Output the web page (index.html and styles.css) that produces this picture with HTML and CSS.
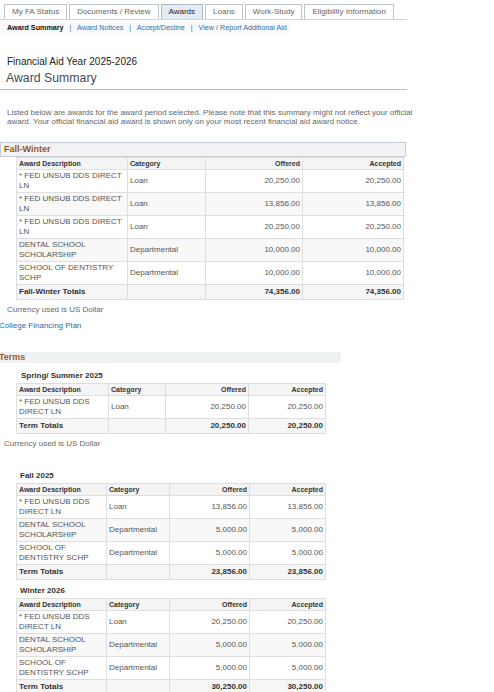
FILE: index.html
```html
<!DOCTYPE html>
<html lang="en">
<head>
    <meta charset="UTF-8">
    <meta name="viewport" content="width=device-width, initial-scale=1.0">
    <title>Award Summary</title>
    <link rel="stylesheet" href="styles.css">
</head>
<body>
    <nav class="tabs">
        <a class="tab" href="#">My FA Status</a>
        <a class="tab" href="#">Documents / Review</a>
        <a class="tab active" href="#">Awards</a>
        <a class="tab" href="#">Loans</a>
        <a class="tab" href="#">Work-Study</a>
        <a class="tab" href="#">Eligibility Information</a>
    </nav>
    <div class="subnav">
        <span class="current">Award Summary</span>
        <span class="sep">|</span>
        <a href="#">Award Notices</a>
        <span class="sep">|</span>
        <a href="#">Accept/Decline</a>
        <span class="sep">|</span>
        <a href="#">View / Report Additional Aid</a>
    </div>

    <div class="page-head">
        <div class="aid-year">Financial Aid Year 2025-2026</div>
        <h1>Award Summary</h1>
    </div>

    <p class="intro">
        Listed below are awards for the award period selected. Please note that this summary might not reflect your official
        award. Your official financial aid award is shown only on your most recent financial aid award notice.
    </p>

    <div class="period-bar">Fall-Winter</div>
    <table class="awards wide">
        <colgroup>
            <col style="width:111px"><col style="width:78px"><col style="width:97px"><col style="width:101px">
        </colgroup>
        <tr class="head"><th>Award Description</th><th>Category</th><th class="num">Offered</th><th class="num">Accepted</th></tr>
        <tr><td>* FED UNSUB DDS DIRECT LN</td><td>Loan</td><td class="num">20,250.00</td><td class="num">20,250.00</td></tr>
        <tr class="alt"><td>* FED UNSUB DDS DIRECT LN</td><td>Loan</td><td class="num">13,856.00</td><td class="num">13,856.00</td></tr>
        <tr><td>* FED UNSUB DDS DIRECT LN</td><td>Loan</td><td class="num">20,250.00</td><td class="num">20,250.00</td></tr>
        <tr class="alt"><td>DENTAL SCHOOL SCHOLARSHIP</td><td>Departmental</td><td class="num">10,000.00</td><td class="num">10,000.00</td></tr>
        <tr><td>SCHOOL OF DENTISTRY SCHP</td><td>Departmental</td><td class="num">10,000.00</td><td class="num">10,000.00</td></tr>
        <tr class="total"><td>Fall-Winter Totals</td><td></td><td class="num">74,356.00</td><td class="num">74,356.00</td></tr>
    </table>
    <div class="currency">Currency used is US Dollar</div>
    <a class="plan-link" href="#">College Financing Plan</a>

    <div class="terms-bar">Terms</div>

    <div class="term-title">Spring/ Summer 2025</div>
    <table class="awards">
        <colgroup>
            <col style="width:92px"><col style="width:57px"><col style="width:83px"><col style="width:77px">
        </colgroup>
        <tr class="head"><th>Award Description</th><th>Category</th><th class="num">Offered</th><th class="num">Accepted</th></tr>
        <tr><td>* FED UNSUB DDS DIRECT LN</td><td>Loan</td><td class="num">20,250.00</td><td class="num">20,250.00</td></tr>
        <tr class="total"><td>Term Totals</td><td></td><td class="num">20,250.00</td><td class="num">20,250.00</td></tr>
    </table>
    <div class="currency tight">Currency used is US Dollar</div>

    <div class="term-title spaced">Fall 2025</div>
    <table class="awards">
        <colgroup>
            <col style="width:90px"><col style="width:63px"><col style="width:80px"><col style="width:76px">
        </colgroup>
        <tr class="head"><th>Award Description</th><th>Category</th><th class="num">Offered</th><th class="num">Accepted</th></tr>
        <tr><td>* FED UNSUB DDS DIRECT LN</td><td>Loan</td><td class="num">13,856.00</td><td class="num">13,856.00</td></tr>
        <tr class="alt"><td>DENTAL SCHOOL SCHOLARSHIP</td><td>Departmental</td><td class="num">5,000.00</td><td class="num">5,000.00</td></tr>
        <tr><td>SCHOOL OF DENTISTRY SCHP</td><td>Departmental</td><td class="num">5,000.00</td><td class="num">5,000.00</td></tr>
        <tr class="total"><td>Term Totals</td><td></td><td class="num">23,856.00</td><td class="num">23,856.00</td></tr>
    </table>

    <div class="term-title next">Winter 2026</div>
    <table class="awards">
        <colgroup>
            <col style="width:90px"><col style="width:63px"><col style="width:80px"><col style="width:76px">
        </colgroup>
        <tr class="head"><th>Award Description</th><th>Category</th><th class="num">Offered</th><th class="num">Accepted</th></tr>
        <tr><td>* FED UNSUB DDS DIRECT LN</td><td>Loan</td><td class="num">20,250.00</td><td class="num">20,250.00</td></tr>
        <tr class="alt"><td>DENTAL SCHOOL SCHOLARSHIP</td><td>Departmental</td><td class="num">5,000.00</td><td class="num">5,000.00</td></tr>
        <tr><td>SCHOOL OF DENTISTRY SCHP</td><td>Departmental</td><td class="num">5,000.00</td><td class="num">5,000.00</td></tr>
        <tr class="total"><td>Term Totals</td><td></td><td class="num">30,250.00</td><td class="num">30,250.00</td></tr>
    </table>
</body>
</html>
```

FILE: styles.css
```css
body {
    font-family: 'Liberation Sans', Arial, sans-serif;
    margin: 0;
    color: #555;
    background-color: #fff;
}
a {
    text-decoration: none;
    color: #3a6ea5;
}
.tabs {
    display: flex;
    gap: 2px;
    padding: 4px 0 0 4px;
    width: 403px;
    border-bottom: 1px solid #c9d8e8;
}
.tab {
    display: block;
    height: 14px;
    line-height: 14px;
    padding: 0 7px;
    font-size: 8px;
    color: #666;
    border: 1px solid #bcc4cd;
    border-bottom: none;
    background-color: #fff;
}
.tab.active {
    color: #222;
    background-color: #e4ebf3;
    border-color: #aeb9c6;
}
.subnav {
    width: fit-content;
    margin-top: 2px;
    padding: 0 4px 0 7px;
    height: 11px;
    line-height: 11px;
    font-size: 7.2px;
    background-color: #f7f9fa;
}
.subnav .current {
    font-weight: bold;
    color: #111;
}
.subnav .sep {
    color: #3a6ea5;
    margin: 0 4px;
}
.page-head {
    width: 407px;
    padding-top: 23px;
    padding-bottom: 3px;
    border-bottom: 1px solid #bdbdbd;
}
.aid-year {
    padding-left: 7px;
    font-size: 10px;
    line-height: 12px;
    color: #222;
}
h1 {
    margin: 2px 0 0;
    padding-left: 6px;
    font-size: 12.3px;
    line-height: 16px;
    font-weight: normal;
    color: #3f4b5b;
}
.intro {
    width: 412px;
    margin: 18px 0 0;
    padding-left: 7px;
    font-size: 8px;
    line-height: 9px;
    color: #666;
}
.period-bar {
    width: 401px;
    margin-top: 16px;
    padding-left: 3px;
    height: 13px;
    line-height: 13px;
    font-size: 9px;
    font-weight: bold;
    color: #99541a;
    background-color: #f1f3f5;
    border: 1px solid #c7cdd4;
}
.awards {
    margin-left: 16px;
    border-collapse: collapse;
    table-layout: fixed;
    font-size: 8px;
    color: #555;
}
.awards.wide {
    width: 387px;
}
.awards th,
.awards td {
    border: 1px solid #dedede;
    padding: 1px 2px;
    vertical-align: middle;
    text-align: left;
}
.awards td {
    line-height: 10px;
}
.awards .head th {
    font-size: 7px;
    font-weight: bold;
    color: #333;
    line-height: 11px;
    padding-top: 0;
    padding-bottom: 0;
    background-color: #f4f4f4;
}
.awards .alt td {
    background-color: #f8f8f8;
}
.awards .total td {
    font-weight: bold;
    color: #333;
    line-height: 12px;
    background-color: #f6f6f6;
}
.awards .num {
    text-align: right;
}
.currency {
    margin-top: 5px;
    padding-left: 7px;
    font-size: 8px;
    line-height: 10px;
    color: #666;
}
.currency.tight {
    padding-left: 4px;
}
.plan-link {
    display: block;
    margin: 6px 0 0 -1px;
    font-size: 8px;
    line-height: 10px;
    color: #2f6aa8;
}
.terms-bar {
    width: 341px;
    margin-top: 21px;
    height: 11px;
    line-height: 11px;
    font-size: 9px;
    font-weight: bold;
    color: #a5581c;
    background-color: #eff2f3;
    text-indent: -1px;
}
.term-title {
    margin-top: 8px;
    padding-left: 21px;
    font-size: 8px;
    line-height: 10px;
    font-weight: bold;
    color: #333;
    margin-bottom: 2px;
}
.term-title.spaced {
    margin-top: 22px;
    padding-left: 20px;
}
.term-title.next {
    margin-top: 6px;
    padding-left: 20px;
}
```
